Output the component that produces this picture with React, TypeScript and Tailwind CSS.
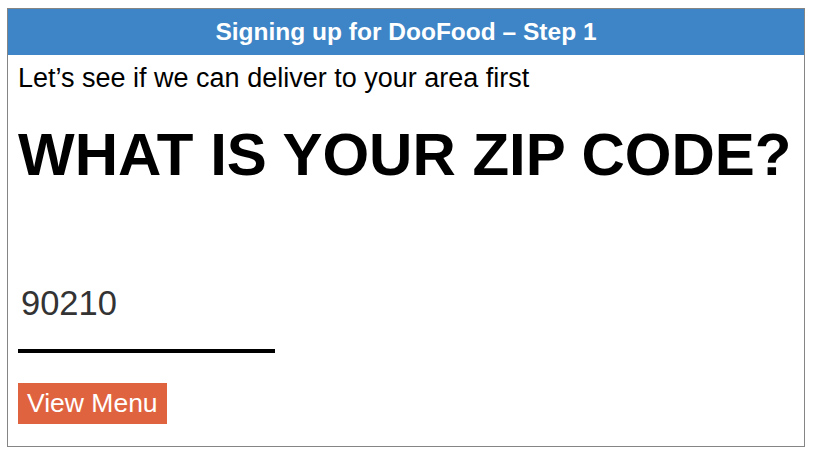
import { useState } from "react";

export default function App() {
  const [zip, setZip] = useState("90210");

  return (
    <div className="w-[814px] h-[458px] bg-white pt-[8px] pl-[7px]" style={{ fontFamily: '"Liberation Sans", Arial, sans-serif' }}>
      <div className="w-[798px] h-[439px] border border-[#858585] flex flex-col">
        {/* HEADER */}
        <div className="h-[46px] bg-[#3d85c6] flex items-center justify-center">
          <h1 className="text-[24.5px] font-bold text-white">Signing up for DooFood – Step 1</h1>
        </div>

        <div className="px-[10px] flex flex-col">
          <p className="text-[27px] text-black mt-[8px] leading-[30px]">Let’s see if we can deliver to your area first</p>
          <h2 className="text-[60px] font-bold text-black leading-[68px] mt-[28px]">WHAT IS YOUR ZIP CODE?</h2>

          {/* ZIP INPUT */}
          <input
            value={zip}
            onChange={(e) => setZip(e.target.value)}
            className="mt-[94px] w-[257px] text-[34.5px] text-[#333] pl-[3px] pb-[26px] border-b-[4px] border-black outline-none leading-[40px]"
          />

          <button className="mt-[30px] self-start bg-[#e0633f] text-white text-[26.5px] px-[9px] h-[41px] leading-[41px]">
            View Menu
          </button>
        </div>
      </div>
    </div>
  );
}
